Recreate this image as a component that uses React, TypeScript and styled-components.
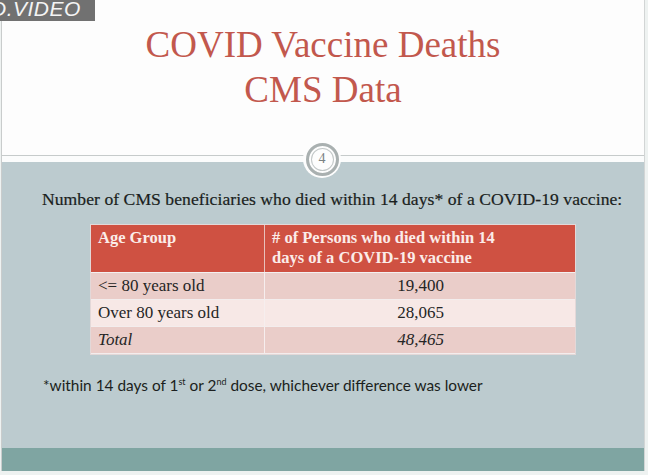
import React from "react";
import styled, { createGlobalStyle } from "styled-components";

const Global = createGlobalStyle`
  html, body { margin: 0; padding: 0; background: #f3f5f5; }
  body { width: 648px; height: 475px; overflow: hidden; }
`;

const Frame = styled.div`
  width: 648px;
  height: 475px;
  position: relative;
  background: #eef2f1;
  overflow: hidden;
`;

const Slide = styled.div`
  width: 644px;
  height: 471px;
  margin-left: 1px;
  border-left: 1px solid #c9cccc;
  border-right: 1px solid #d2d5d5;
  display: flex;
  flex-direction: column;
  box-sizing: border-box;
`;

const TitleArea = styled.header`
  height: 156px;
  background: #fdfdfd;
  border-bottom: 1px solid #c6cbcb;
  display: flex;
  flex-direction: column;
  align-items: center;
  padding-top: 22px;
  box-sizing: border-box;
`;

const Title = styled.h1`
  margin: 0;
  font-family: "Liberation Serif", "Times New Roman", serif;
  font-weight: 400;
  font-size: 37px;
  line-height: 45px;
  color: #c2584d;
  text-align: center;
`;

const Gap = styled.div`
  height: 6px;
  background: #fbfcfc;
`;

const Panel = styled.main`
  flex: 1;
  background: #bccbcf;
  display: flex;
  flex-direction: column;
  padding: 26px 0 0 40px;
`;

const Lead = styled.p`
  margin: 0;
  font-family: "Liberation Serif", "Times New Roman", serif;
  font-size: 17.6px;
  line-height: 22px;
  color: #1a1e20;
  letter-spacing: 0.05px;
  -webkit-text-stroke: 0.2px #1a1e20;
`;

const Table = styled.table`
  margin: 15px 0 0 49px;
  width: 484px;
  border-collapse: collapse;
  font-family: "Liberation Serif", "Times New Roman", serif;
  font-size: 17px;
  color: #252525;
  outline: 1px solid #e3d8d8;
`;

const HeadCell = styled.th<{ $w?: number }>`
  background: #cf5142;
  color: #fbece9;
  font-weight: 700;
  text-align: left;
  vertical-align: top;
  padding: 3px 6px 4px 7px;
  height: 39px;
  line-height: 20px;
  font-size: 16.5px;
  border-right: 1px solid #e8c1bb;
  border-bottom: 1px solid #f3f0f0;
  width: ${(p) => (p.$w ? `${p.$w}px` : "auto")};
  &:last-child { border-right: none; }
`;

const Row = styled.tr<{ $alt?: boolean }>`
  background: ${(p) => (p.$alt ? "#f7e8e6" : "#eacdc9")};
`;

const Cell = styled.td<{ $center?: boolean; $italic?: boolean }>`
  height: 26px;
  padding: 0 6px 0 7px;
  text-align: ${(p) => (p.$center ? "center" : "left")};
  font-style: ${(p) => (p.$italic ? "italic" : "normal")};
  border-right: 1px solid #f6eeee;
  border-bottom: 1px solid #f3eded;
  &:last-child { border-right: none; }
`;

const Note = styled.p`
  margin: 22px 0 0 1px;
  font-family: Lato, "Open Sans", sans-serif;
  font-size: 15.4px;
  color: #1b1f20;
  sup { font-size: 9px; vertical-align: 6px; line-height: 0; }
`;

const Footer = styled.footer`
  height: 23px;
  background: #7fa5a2;
`;

const Badge = styled.div`
  position: absolute;
  left: 303px;
  top: 140px;
  width: 38px;
  height: 38px;
  border-radius: 50%;
  background: #fdfdfd;
  display: flex;
  align-items: center;
  justify-content: center;
  z-index: 2;
`;

const Ring = styled.div`
  width: 33px;
  height: 33px;
  border-radius: 50%;
  border: 3px solid #a9b0b0;
  box-shadow: inset 0 0 0 2px #fdfdfd, inset 0 0 0 3px #c3c8c8;
  display: flex;
  align-items: center;
  justify-content: center;
  font-family: "Liberation Serif", serif;
  font-size: 14px;
  color: #7a8283;
  box-sizing: border-box;
`;

const Watermark = styled.div`
  position: absolute;
  left: 0;
  top: 0;
  width: 95px;
  height: 21px;
  background: #717171;
  overflow: hidden;
  z-index: 3;
`;

const MarkText = styled.span`
  display: block;
  margin-left: -9px;
  margin-top: -3px;
  font-family: "Liberation Sans", Arial, sans-serif;
  font-style: italic;
  font-size: 21px;
  line-height: 24px;
  color: #f4f4f4;
  letter-spacing: 0.5px;
  white-space: nowrap;
`;

const rows = [
  { group: "<= 80 years old", n: "19,400" },
  { group: "Over 80 years old", n: "28,065", alt: true },
];

export default function App() {
  return (
    <Frame>
      <Global />
      <Watermark>
        <MarkText>D.VIDEO</MarkText>
      </Watermark>
      <Badge>
        <Ring>4</Ring>
      </Badge>
      <Slide>
        <TitleArea>
          <Title>
            COVID Vaccine Deaths
            <br />
            CMS Data
          </Title>
        </TitleArea>
        <Gap />
        <Panel>
          <Lead>
            Number of CMS beneficiaries who died within 14 days* of a COVID-19 vaccine:
          </Lead>
          <Table>
            <thead>
              <tr>
                <HeadCell $w={160}>Age Group</HeadCell>
                <HeadCell>
                  # of Persons who died within 14
                  <br />
                  days of a COVID-19 vaccine
                </HeadCell>
              </tr>
            </thead>
            <tbody>
              {rows.map((r) => (
                <Row key={r.group} $alt={r.alt}>
                  <Cell>{r.group}</Cell>
                  <Cell $center>{r.n}</Cell>
                </Row>
              ))}
              <Row>
                <Cell $italic>Total</Cell>
                <Cell $center $italic>
                  48,465
                </Cell>
              </Row>
            </tbody>
          </Table>
          <Note>
            *within 14 days of 1<sup>st</sup> or 2<sup>nd</sup> dose, whichever difference was lower
          </Note>
        </Panel>
        <Footer />
      </Slide>
    </Frame>
  );
}
